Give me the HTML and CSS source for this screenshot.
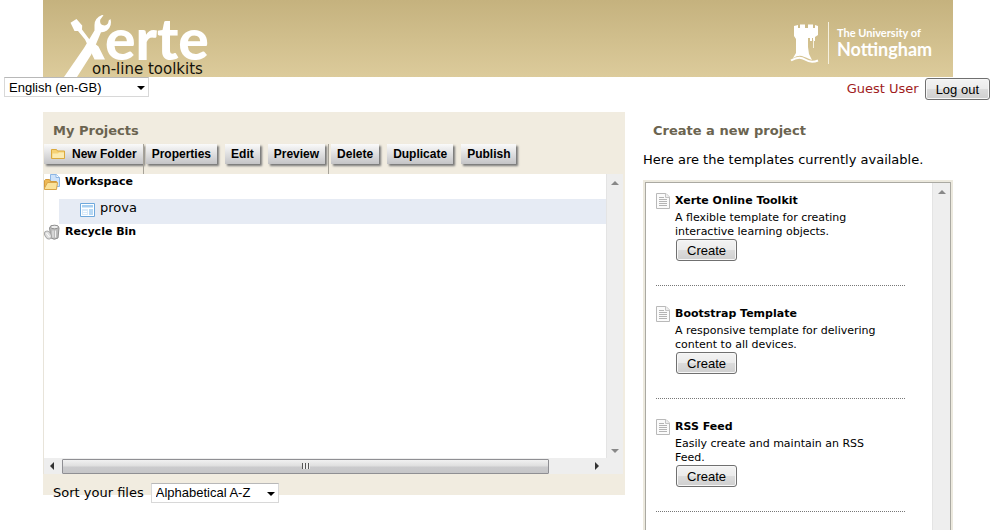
FILE: index.html
```html
<!DOCTYPE html>
<html lang="en-GB">
<head>
<meta charset="utf-8">
<title>Xerte on-line toolkits</title>
<link rel="stylesheet" href="styles.css">
</head>
<body>
<svg class="symbols" aria-hidden="true">
  <symbol id="page" viewBox="0 0 14 16">
    <path d="M.5.5h9.500l3.500 3.500v11.500H.5z" fill="#fbfbfb" stroke="#b9b9b9"/>
    <path d="M9.500.5v4h4" fill="#eee" stroke="#c4c4c4"/>
    <path d="M3 4.500h5M3 6.500h8M3 8.500h8M3 10.500h8M3 12.500h8" stroke="#b4b4b4"/>
  </symbol>
</svg>

<header class="banner">
  <svg class="logo" viewBox="0 0 170 77" role="img" aria-label="Xerte on-line toolkits">
    <g fill="#fff">
      <path d="M26.500 22.800l6-3.800 5.700 6.500-.2 4 7.500 10 9 7 6.500 13h-10.500l-9.500-20L34 31h-3.500z"/>
      <path d="M50.500 25q0-7 7.500-10l1.500.3-3.300 4.500q-1 5.500 4.500 5.700 3.500-.5 4-5l1.800-1.500q2 7-3.500 11.500-3 2-6 1.700L52.500 43 47 55 33 77H20l20-29 10.500-17.500z"/>
    </g>
    <text class="logo-name" x="61" y="60">erte</text>
    <text class="logo-sub" x="48" y="74">on-line toolkits</text>
  </svg>
  <svg class="university" viewBox="0 0 150 46" role="img" aria-label="The University of Nottingham">
    <path fill="#fff" d="M3 4l4-1v3h2V2.500h5V6h3V2.500h5V6h2V3l3 1v9l-3 2v4h-2v-3h-1v3h-2v-3h-2v9l1 7 3 6q-7-3-10-4-4-1-9 2l3-5V17l-2-3z"/>
    <path d="M22.500 18v8" stroke="#f7f2e2" fill="none"/>
    <path d="M0 38.500q8-5 14-1 6 4 13 1" stroke="#fff" stroke-width="2" fill="none"/>
    <path d="M37.500 0v42" stroke="#f5f0df"/>
    <text class="uni-small" x="46" y="15">The University of</text>
    <text class="uni-large" x="46" y="34">Nottingham</text>
  </svg>
</header>

<div class="userbar">
  <span class="select language"><select aria-label="Language"><option>English (en-GB)</option></select></span>
  <div class="account"><span class="username">Guest User</span><button class="button" type="button">Log out</button></div>
</div>

<main class="columns">
  <section class="projects">
    <h2 class="heading">My Projects</h2>
    <div class="toolbar">
      <div class="group">
        <button class="tool" type="button"><svg width="14" height="12" viewBox="0 0 14 12" aria-hidden="true"><path d="M.5 10.500v-9h5l1 1.500h7v7.500z" fill="#f6d275" stroke="#dba93c"/><path d="M1.500 10V5.500H7l1-1h5V10z" fill="#fcebb0"/></svg>New Folder</button>
      </div>
      <div class="group">
        <button class="tool" type="button">Properties</button>
        <button class="tool" type="button">Edit</button>
        <button class="tool" type="button">Preview</button>
      </div>
      <div class="group">
        <button class="tool" type="button">Delete</button>
        <button class="tool" type="button">Duplicate</button>
        <button class="tool" type="button">Publish</button>
      </div>
    </div>
    <div class="browser">
      <ul class="tree">
        <li class="root"><svg width="16" height="16" viewBox="0 0 16 16" aria-hidden="true"><path d="M6.500.5h6l3 3v9h-9z" fill="#cfe3fa" stroke="#8db6e4"/><path d="M12 .5v3h3.500" fill="#fff" stroke="#8db6e4"/><path d="M.5 14V6.500l1-1h4l1 2h6V14z" fill="#eeb955" stroke="#d39a3c"/><path d="M.5 15.500V14l3-5.500h10l-1 7z" fill="#fbe29a" stroke="#d9a548"/></svg><b>Workspace</b></li>
        <li class="file"><svg width="15" height="14" viewBox="0 0 15 14" aria-hidden="true"><path d="M.5.5h14v13H.5z" fill="#fff" stroke="#6ea8dc"/><path d="M2 2h11v2.500H2z" fill="#a6cef0"/><path d="M2 6h6v6H2z" fill="#d9eafa"/><path d="M9 6h4v6H9z" fill="#b7d8f4"/><path d="M3 8.500h4M3 10.500h4" stroke="#fff"/></svg>prova</li>
        <li class="root"><svg width="16" height="16" viewBox="0 0 16 16" aria-hidden="true"><path d="M5.500 4l1.500-2.500 7 .5 1 2-1 10q-4 2.500-7 0z" fill="#bbb" stroke="#909090"/><ellipse cx="10.500" cy="3" rx="4" ry="1.800" fill="#ededed" stroke="#929292"/><path d="M9 6.500v7M11.500 6.500v7" stroke="#f1f1f1"/><ellipse cx="4" cy="11" rx="3" ry="4.200" transform="rotate(-32 4 11)" fill="#dedede" stroke="#a6a6a6"/><path d="M2.500 9l3 4" stroke="#fff"/></svg><b>Recycle Bin</b></li>
      </ul>
      <div class="vbar" aria-hidden="true"><i class="arrow up"></i><i class="arrow down"></i></div>
      <div class="hbar" aria-hidden="true"><i class="arrow left"></i><span class="track"><span class="thumb"></span></span><i class="arrow right"></i></div>
    </div>
    <div class="sort">
      <label for="sort">Sort your files</label>
      <span class="select order"><select id="sort"><option>Alphabetical A-Z</option></select></span>
    </div>
  </section>

  <section class="templates">
    <h2 class="heading">Create a new project</h2>
    <p class="intro">Here are the templates currently available.</p>
    <div class="frame">
      <div class="list">
        <article class="template">
          <svg class="page" aria-hidden="true"><use href="#page"/></svg>
          <div class="details"><h3>Xerte Online Toolkit</h3><p>A flexible template for creating interactive learning objects.</p><button class="button" type="button">Create</button></div>
        </article>
        <article class="template">
          <svg class="page" aria-hidden="true"><use href="#page"/></svg>
          <div class="details"><h3>Bootstrap Template</h3><p>A responsive template for delivering content to all devices.</p><button class="button" type="button">Create</button></div>
        </article>
        <article class="template">
          <svg class="page" aria-hidden="true"><use href="#page"/></svg>
          <div class="details"><h3>RSS Feed</h3><p>Easily create and maintain an RSS Feed.</p><button class="button" type="button">Create</button></div>
        </article>
      </div>
      <div class="vbar" aria-hidden="true"><i class="arrow up"></i></div>
    </div>
  </section>
</main>
</body>
</html>
```
FILE: styles.css
```css
* { box-sizing: border-box; }

body {
  margin: 0;
  height: 100vh;
  overflow: hidden;
  display: flex;
  flex-direction: column;
  background: #fff;
  color: #000;
  font: 13px/16px Verdana, "DejaVu Sans", sans-serif;
}

h2, h3, p, ul { margin: 0; padding: 0; }
svg { flex: none; }
.symbols { display: none; }

.banner {
  flex: none;
  display: flex;
  justify-content: space-between;
  align-items: flex-start;
  height: 77px;
  margin: 0 46px 0 43px;
  background: linear-gradient(#c5b27e, #dccb9b);
}
.logo { width: 170px; height: 77px; margin-left: 1px; }
.logo-name { font: 900 57px Lato, sans-serif; fill: #fff; }
.logo-sub { font: 15px Verdana, "DejaVu Sans", sans-serif; fill: #15120a; }
.university { width: 150px; height: 46px; margin: 22px 12px 0 0; overflow: visible; }
.uni-small, .uni-large { font: bold 11px Lato, sans-serif; fill: #fff; }
.uni-large { font-size: 18px; }

.userbar {
  flex: none;
  display: flex;
  justify-content: space-between;
  align-items: flex-start;
  height: 35px;
  padding: 0 9px 0 4px;
}
.account { display: flex; align-items: center; gap: 6px; padding-top: 1px; }
.username { color: #a01c1c; }

.select { position: relative; display: inline-flex; }
.select::after {
  content: "";
  position: absolute;
  right: 4px;
  top: 9px;
  border: 4px solid transparent;
  border-top-color: #000;
  border-bottom: 0;
  pointer-events: none;
}
select {
  appearance: none;
  width: 100%;
  height: 20px;
  margin: 0;
  padding: 0 16px 0 4px;
  border: 1px solid #d8d8d8;
  border-top-color: #b8b8b8;
  border-radius: 0;
  background: #fff;
  color: #000;
  font: 13px "Liberation Sans", Arial, sans-serif;
}
.language { width: 145px; }
.order { width: 128px; }

.button {
  height: 22px;
  padding: 0 10px;
  border: 1px solid #707070;
  border-radius: 3px;
  background: linear-gradient(#f3f3f3 0%, #ebebeb 50%, #dcdcdc 51%, #cfcfcf 100%);
  box-shadow: inset 0 0 0 1px #f7f7f7;
  color: #000;
  font: 13px "Liberation Sans", Arial, sans-serif;
}

.columns {
  flex: 1;
  min-height: 0;
  display: grid;
  grid-template-columns: minmax(0, 582fr) minmax(0, 310fr);
  gap: 18px;
  margin: 0 46px 0 43px;
}
.heading {
  padding: 10px 10px 0;
  color: #6b6450;
  font-size: 13px;
  line-height: 18px;
}

.projects { display: flow-root; align-self: start; background: #f1ece0; }
.toolbar { display: flex; height: 34px; padding-top: 4px; }
.group { display: flex; align-items: flex-start; gap: 8px; padding: 0 3px 0 2px; }
.group:first-child { padding: 0 0 0 1px; }
.tool {
  display: flex;
  align-items: center;
  gap: 7px;
  height: 20px;
  padding: 0 6px;
  border: 0;
  background: linear-gradient(#fafafa, #c4c4c6);
  box-shadow: 2px 2px 2px #777;
  color: #000;
  font: bold 12px "Liberation Sans", Arial, sans-serif;
  white-space: nowrap;
}
.group:first-child .tool { padding-left: 7px; }
.group + .group { border-left: 1px solid #a6a298; }

.browser {
  display: grid;
  grid-template: 284px 16px / 1fr 17px;
  margin-right: 2px;
  border-left: 1px solid #e8e4da;
  background: #fff;
}
.tree { list-style: none; min-width: 0; font-size: 11px; }
.tree li { display: flex; align-items: center; gap: 5px; }
.root { height: 16px; }
.root svg { align-self: flex-start; }
.tree .file {
  height: 25px;
  margin: 9px 0 0 15px;
  padding: 0 0 7px 21px;
  background: #e6ebf4;
  font-size: 13px;
}
.file svg { align-self: flex-end; }

.vbar {
  display: flex;
  flex-direction: column;
  justify-content: space-between;
  align-items: center;
  padding: 7px 0 5px;
  border-left: 1px solid #e4e4e4;
  background: #eee;
}
.hbar {
  grid-column: 1 / -1;
  display: flex;
  align-items: center;
  padding: 0 24px 0 6px;
  background: #eee;
}
.track { flex: 1; margin: 0 46px 0 8px; }
.thumb {
  display: flex;
  justify-content: center;
  align-items: center;
  height: 15px;
  border: 1px solid #8f8f93;
  border-radius: 1px;
  background: linear-gradient(#f1f1f1 0%, #dedede 48%, #cbcbcd 52%, #c6c6c8 100%);
}
.thumb::before {
  content: "";
  width: 8px;
  height: 6px;
  background: repeating-linear-gradient(90deg, #555 0 1px, #eee 1px 3px);
}
.arrow { width: 0; height: 0; border: 4px solid transparent; }
.up { border-top: 0; border-bottom-color: #888; }
.down { border-bottom: 0; border-top-color: #888; }
.left { border-left: 0; border-right-color: #333; }
.right { border-right: 0; border-left-color: #333; }

.sort {
  display: flex;
  align-items: center;
  gap: 7px;
  height: 29px;
  margin-bottom: -8px;
  padding: 8px 10px 0;
}

.templates { display: flex; flex-direction: column; min-height: 0; }
.intro { margin-top: 12px; padding-bottom: 12px; white-space: nowrap; }
.frame {
  flex: 1;
  min-height: 0;
  display: grid;
  grid-template-columns: minmax(0, 1fr) 18px;
  padding: 1px 1px 0;
  border: 2px solid #ece9de;
  border-bottom: 0;
  background: #aaa9a2;
}
.list {
  min-height: 0;
  overflow: hidden;
  display: flex;
  flex-direction: column;
  gap: 19px;
  padding: 9px 27px 0 10px;
  background: #fff;
}
.template {
  flex: none;
  display: flex;
  gap: 5px;
  padding-bottom: 24px;
  border-bottom: 1px dotted #777;
}
.page { width: 14px; height: 16px; margin-top: 1px; }
.details {
  display: flex;
  flex-direction: column;
  align-items: flex-start;
  max-width: 218px;
  padding-top: 1px;
}
.details h3 { font-size: 11px; line-height: 16px; }
.details p { margin-top: 2px; font-size: 11px; line-height: 14px; }
.details .button { margin-left: 1px; }
```
